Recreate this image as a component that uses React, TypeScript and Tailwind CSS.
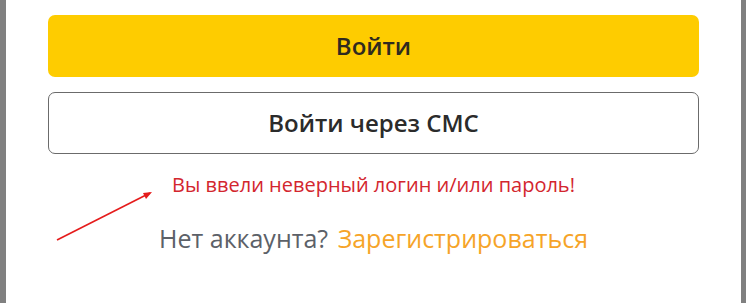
import React from "react";

export default function App() {
  return (
    <div className="flex h-[303px] w-[746px] bg-[#808080] px-[6px] pr-[5px]" style={{ fontFamily: "'Open Sans', 'Noto Sans', sans-serif" }}>
      <div className="relative flex flex-1 flex-col bg-white px-[42px] pt-[15px]">
        <button className="h-[62px] w-full rounded-[7px] bg-[#fecc00] text-[24px] font-semibold text-[#2f2a1f]">
          Войти
        </button>
        <button className="mt-[15px] h-[62px] w-full rounded-[7px] border border-[#6b6b6b] bg-white text-[24px] font-semibold text-[#2b2b2b]">
          Войти через СМС
        </button>
        <div className="mt-[19px] text-center text-[20px] leading-[24px] text-[#d3262e]">
          Вы ввели неверный логин и/или пароль!
        </div>
        <div className="mt-[26px] text-center text-[25px] leading-[30px] text-[#5c6168]">
          Нет аккаунта? <span className="ml-[3px] text-[#f6a428]">Зарегистрироваться</span>
        </div>
        <svg className="absolute left-[45px] top-[184px]" width="110" height="62" viewBox="0 0 110 62">
          <line x1="6" y1="56" x2="99" y2="9" stroke="#e51b1b" strokeWidth="1.6" />
          <polygon points="101,8 92,9 95,15" fill="#e51b1b" />
        </svg>
      </div>
    </div>
  );
}
